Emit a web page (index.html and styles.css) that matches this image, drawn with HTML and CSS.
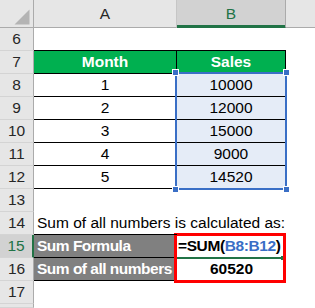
FILE: index.html
```html
<!DOCTYPE html>
<html>
<head>
<meta charset="utf-8">
<link rel="stylesheet" href="styles.css">
</head>
<body>
<div class="sheet">
  <div class="corner"><svg width="33" height="27" viewBox="0 0 33 27"><polygon points="29.5,9.5 29.5,24.5 14.5,24.5" fill="#b4b4b4"/></svg></div>
  <div class="colhead">A</div>
  <div class="colhead sel">B</div>
  <div class="colhead last"></div>

  <div class="rh">6</div><div class="c tedge"></div><div class="c tedge"></div><div class="c"></div>
  <div class="rh">7</div><div class="c green vr">Month</div><div class="c green vr">Sales</div><div class="c"></div>
  <div class="rh">8</div><div class="c row vr">1</div><div class="c row vr blue">10000</div><div class="c"></div>
  <div class="rh">9</div><div class="c row vr">2</div><div class="c row vr blue">12000</div><div class="c"></div>
  <div class="rh">10</div><div class="c row vr">3</div><div class="c row vr blue">15000</div><div class="c"></div>
  <div class="rh">11</div><div class="c row vr">4</div><div class="c row vr blue">9000</div><div class="c"></div>
  <div class="rh">12</div><div class="c row vr">5</div><div class="c row vr blue">14520</div><div class="c"></div>
  <div class="rh">13</div><div class="c"></div><div class="c"></div><div class="c"></div>
  <div class="rh">14</div><div class="c note tedge">Sum of all numbers is calculated as:</div><div class="c"></div><div class="c"></div>
  <div class="rh active">15</div><div class="c label">Sum Formula</div><div class="c formula">=SUM(<span class="ref">B8:B12</span>)</div><div class="c"></div>
  <div class="rh">16</div><div class="c label">Sum of all numbers</div><div class="c total">60520</div><div class="c"></div>
  <div class="rh">17</div><div class="c"></div><div class="c"></div><div class="c"></div>
  <div class="rh"></div><div class="c"></div><div class="c"></div><div class="c"></div>

  <div class="refbox">
    <span class="h tl"></span><span class="h tr"></span><span class="h bl"></span><span class="h br"></span>
  </div>
  <div class="editline"></div>
  <div class="fillh"></div>
  <div class="redbox"></div>
</div>
</body>
</html>
```
FILE: styles.css
```css
html, body {
  margin: 0;
  padding: 0;
  background: #fff;
  overflow: hidden;
}
.sheet {
  position: relative;
  width: 315px;
  height: 308px;
  display: grid;
  grid-template-columns: 34px 143px 109px 29px;
  grid-template-rows: 28px repeat(12, 23px) 4px;
  font-family: "Liberation Sans", Arial, sans-serif;
  font-size: 15.5px;
  color: #000;
  overflow: hidden;
}
.corner {
  background: #e6e6e6;
  border-right: 1px solid #ababab;
  border-bottom: 1px solid #ababab;
  box-sizing: border-box;
}
.corner svg { display: block; }
.colhead {
  background: #e6e6e6;
  border-right: 1px solid #c6c6c6;
  border-bottom: 1px solid #ababab;
  box-sizing: border-box;
  text-align: center;
  line-height: 27px;
  color: #262626;
}
.colhead.sel {
  background: #d2d2d2;
  color: #217346;
  border-bottom-color: #217346;
  box-shadow: inset 0 -2px 0 #217346;
  border-right-color: #ababab;
}
.colhead.last { border-right: none; }
.rh {
  background: #e6e6e6;
  border-right: 1px solid #ababab;
  border-bottom: 1px solid #d4d4d4;
  box-sizing: border-box;
  text-align: center;
  line-height: 22px;
  color: #262626;
}
.rh.active {
  background: #d2d2d2;
  color: #217346;
  border-right: 2px solid #217346;
}
.c {
  box-sizing: border-box;
  line-height: 22px;
  text-align: center;
  white-space: nowrap;
}
.tedge { border-bottom: 1px solid #000; }
.green {
  background: #00b050;
  color: #fff;
  font-weight: bold;
  border-bottom: 1px solid #000;
}
.vr { border-right: 1px solid #000; }
.row { border-bottom: 1px solid #000; }
.blue { background: #e5ecf7; }
.note {
  text-align: left;
  padding-left: 3px;
  overflow: visible;
  position: relative;
  z-index: 1;
}
.label {
  background: #808080;
  color: #fff;
  font-weight: bold;
  text-align: left;
  padding-left: 3px;
  letter-spacing: -0.5px;
  border-bottom: 1px solid #000;
}
.formula {
  text-align: left;
  font-weight: bold;
  letter-spacing: -0.4px;
  padding-left: 1px;
  overflow: visible;
}
.ref { color: #3a6fc6; }
.total {
  font-weight: bold;
}
.refbox {
  position: absolute;
  left: 175px;
  top: 72px;
  width: 112px;
  height: 118px;
  box-sizing: border-box;
  border: 2px solid #3a6fc6;
}
.h {
  position: absolute;
  width: 5px;
  height: 5px;
  background: #3a6fc6;
  border: 1px solid #fff;
}
.h.tl { left: -5px; top: -5px; }
.h.tr { right: -5px; top: -5px; }
.h.bl { left: -5px; bottom: -5px; }
.h.br { right: -5px; bottom: -5px; }
.editline {
  position: absolute;
  left: 177px;
  top: 257px;
  width: 105px;
  height: 2px;
  background: #217346;
}
.fillh {
  position: absolute;
  left: 281px;
  top: 256px;
  width: 4px;
  height: 4px;
  background: #217346;
}
.redbox {
  position: absolute;
  left: 174px;
  top: 233px;
  width: 112px;
  height: 50px;
  box-sizing: border-box;
  border: 3px solid #ff0000;
}
```
